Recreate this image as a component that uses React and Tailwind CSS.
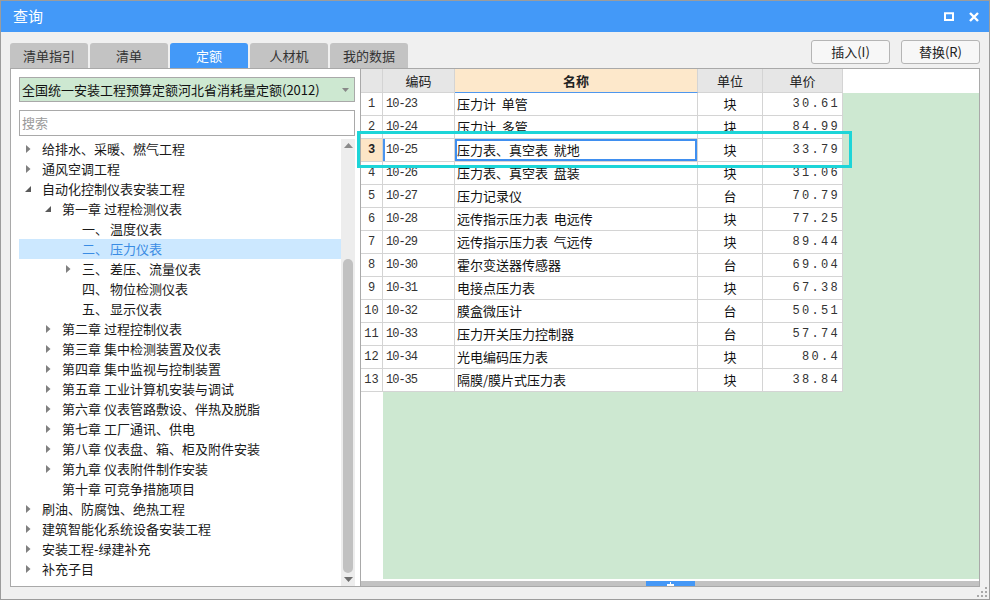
/**
 * 查询 dialog – 定额 lookup window.
 */

const TABS = ['清单指引', '清单', '定额', '人材机', '我的数据'];

const TREE = [
  { lv: 0, arrow: 'right', label: '给排水、采暖、燃气工程' },
  { lv: 0, arrow: 'right', label: '通风空调工程' },
  { lv: 0, arrow: 'down', label: '自动化控制仪表安装工程' },
  { lv: 1, arrow: 'down', label: '第一章 过程检测仪表' },
  { lv: 2, pre: '一、', label: '温度仪表' },
  { lv: 2, pre: '二、', label: '压力仪表', selected: true },
  { lv: 2, arrow: 'right', pre: '三、', label: '差压、流量仪表' },
  { lv: 2, pre: '四、', label: '物位检测仪表' },
  { lv: 2, pre: '五、', label: '显示仪表' },
  { lv: 1, arrow: 'right', label: '第二章 过程控制仪表' },
  { lv: 1, arrow: 'right', label: '第三章 集中检测装置及仪表' },
  { lv: 1, arrow: 'right', label: '第四章 集中监视与控制装置' },
  { lv: 1, arrow: 'right', label: '第五章 工业计算机安装与调试' },
  { lv: 1, arrow: 'right', label: '第六章 仪表管路敷设、伴热及脱脂' },
  { lv: 1, arrow: 'right', label: '第七章 工厂通讯、供电' },
  { lv: 1, arrow: 'right', label: '第八章 仪表盘、箱、柜及附件安装' },
  { lv: 1, arrow: 'right', label: '第九章 仪表附件制作安装' },
  { lv: 1, label: '第十章 可竞争措施项目' },
  { lv: 0, arrow: 'right', label: '刷油、防腐蚀、绝热工程' },
  { lv: 0, arrow: 'right', label: '建筑智能化系统设备安装工程' },
  { lv: 0, arrow: 'right', label: '安装工程-绿建补充' },
  { lv: 0, arrow: 'right', label: '补充子目' },
];

const ROWS = [
  ['10-23', '压力计 单管', '块', '30.61'],
  ['10-24', '压力计 多管', '块', '84.99'],
  ['10-25', '压力表、真空表 就地', '块', '33.79'],
  ['10-26', '压力表、真空表 盘装', '块', '31.06'],
  ['10-27', '压力记录仪', '台', '70.79'],
  ['10-28', '远传指示压力表 电远传', '块', '77.25'],
  ['10-29', '远传指示压力表 气远传', '块', '89.44'],
  ['10-30', '霍尔变送器传感器', '台', '69.04'],
  ['10-31', '电接点压力表', '块', '67.38'],
  ['10-32', '膜盒微压计', '台', '50.51'],
  ['10-33', '压力开关压力控制器', '台', '57.74'],
  ['10-34', '光电编码压力表', '块', '80.4'],
  ['10-35', '隔膜/膜片式压力表', '块', '38.84'],
];

const SELECTED_ROW = 2;

const MONO = "font-['Liberation_Mono',monospace]";

function Arrow({ type }) {
  if (type === 'right') {
    return (
      <svg width="5" height="8" viewBox="0 0 5 8">
        <path d="M0 0 L4.5 4 L0 8 Z" fill="#808080" />
      </svg>
    );
  }
  if (type === 'down') {
    return (
      <svg width="6" height="6" viewBox="0 0 6 6">
        <path d="M6 0 L6 6 L0 6 Z" fill="#595959" />
      </svg>
    );
  }
  return null;
}

function TreeRow({ item }) {
  const pad = { 0: 'pl-[3px]', 1: 'pl-[23px]', 2: 'pl-[43px]' }[item.lv];
  return (
    <div
      className={`flex items-center h-[20px] text-[13px] whitespace-nowrap ${pad} ${
        item.selected ? 'bg-[#cce8ff] text-[#3a8ce4]' : 'text-[#1a1a1a]'
      }`}
    >
      <span className="w-[12px] flex items-center justify-center">
        <Arrow type={item.arrow} />
      </span>
      <span className="ml-[8px] leading-[20px]">
        {item.pre && <span className="inline-block w-[28px]">{item.pre}</span>}
        {item.label}
      </span>
    </div>
  );
}

function TreeScrollbar() {
  return (
    <div className="w-[14px] bg-[#ededed] flex flex-col">
      <div className="h-[12px] flex items-center justify-center">
        <svg width="9" height="5" viewBox="0 0 9 5">
          <path d="M0 5 L4.5 0 L9 5 Z" fill="#8a8a8a" />
        </svg>
      </div>
      <div className="h-[108px]" />
      <div className="flex-1 mx-[2px] rounded-full bg-[#c1c1c1]" />
      <div className="h-[13px] flex items-center justify-center">
        <svg width="9" height="5" viewBox="0 0 9 5">
          <path d="M0 0 L9 0 L4.5 5 Z" fill="#6e6e6e" />
        </svg>
      </div>
    </div>
  );
}

function LeftPanel() {
  return (
    <div className="w-[351px] border border-[#a9a9a9] bg-white flex flex-col pt-[8px] pl-[8px] pr-[5px]">
      <div className="h-[25px] border border-[#a9a9a9] bg-[#cde8d1] flex items-center justify-between pl-[2px] pr-[5px] text-[13px] text-[#111]">
        <span>全国统一安装工程预算定额河北省消耗量定额(2012)</span>
        <svg width="7" height="4" viewBox="0 0 7 4">
          <path d="M0 0 L7 0 L3.5 4 Z" fill="#888" />
        </svg>
      </div>
      <div className="mt-[8px] h-[26px] border border-[#a9a9a9] bg-white flex items-center pl-[2px] text-[13px] text-[#9a9a9a]">
        搜索
      </div>
      <div className="mt-[3px] flex-1 flex min-h-0">
        <div className="flex-1 overflow-hidden">
          {TREE.map((item, i) => (
            <TreeRow key={i} item={item} />
          ))}
        </div>
        <TreeScrollbar />
      </div>
    </div>
  );
}

const CELL = 'border-r border-b border-[#d4d4d4] flex items-center';

function RightPanel() {
  return (
    <div className="flex-1 border border-l-0 border-[#a9a9a9] bg-white flex flex-col">
      {/* header */}
      <div className="h-[24px] flex text-[13px] text-[#222]">
        <div className={`${CELL} w-[22px] bg-[#e6e6e6]`} />
        <div className={`${CELL} w-[72px] bg-[#e6e6e6] justify-center`}>编码</div>
        <div className="w-[243px] border-r border-[#d4d4d4] border-b border-b-[#4e97ee] bg-[#fde8cb] flex items-center justify-center font-bold">
          名称
        </div>
        <div className={`${CELL} w-[65px] bg-[#e6e6e6] justify-center`}>单位</div>
        <div className={`${CELL} w-[80px] bg-[#e6e6e6] justify-center`}>单价</div>
        <div className="flex-1" />
      </div>

      {/* body */}
      <div className="flex-1 flex min-h-0">
        <div className="w-[22px] flex flex-col">
          {ROWS.map((r, i) => (
            <div
              key={i}
              className={`${CELL} h-[23px] justify-center text-[12px] ${MONO} ${
                i === SELECTED_ROW ? 'bg-[#fde5c6] font-bold text-[#222]' : 'text-[#333]'
              }`}
            >
              {i + 1}
            </div>
          ))}
        </div>
        <div className="flex-1 bg-[#cde8d1] flex flex-col">
          {ROWS.map((r, i) => {
            const sel = i === SELECTED_ROW;
            return (
              <div key={i} className="h-[23px] w-[460px] flex bg-white text-[#111]">
                <div
                  className={`${CELL} w-[72px] pl-[3px] text-[12px] tracking-[-1px] text-[#333] ${MONO} ${
                    sel ? 'shadow-[inset_2px_0_0_#4a94ee]' : ''
                  }`}
                >
                  {r[0]}
                </div>
                <div
                  className={`${CELL} w-[243px] pl-[2px] text-[13px] whitespace-pre ${
                    sel ? 'shadow-[inset_0_0_0_2px_#3f8ff0]' : ''
                  }`}
                >
                  {r[1].replace(' ', '  ')}
                </div>
                <div className={`${CELL} w-[65px] justify-center text-[13px]`}>{r[2]}</div>
                <div className={`${CELL} w-[80px] justify-end pr-[2px] text-[12px] tracking-[2.3px] text-[#333] ${MONO}`}>
                  {r[3]}
                </div>
              </div>
            );
          })}
        </div>
      </div>

      <div className="h-[2px]" />
      {/* horizontal scrollbar */}
      <div className="h-[5px] bg-[#c2c2c2] flex">
        <div className="w-[285px]" />
        <div className="w-[49px] bg-[#4598f6] flex items-center justify-center">
          <svg width="7" height="4" viewBox="0 0 7 4">
            <path d="M3 0 H4 V2 H7 V4 H0 V2 H3 Z" fill="#fff" />
          </svg>
        </div>
      </div>
    </div>
  );
}

export default function App() {
  return (
    <div className="relative w-[990px] h-[600px] border border-[#9c9c9c] bg-[#f0f0f0] flex flex-col overflow-hidden font-['Noto_Sans_CJK_SC',sans-serif]">
      {/* title bar */}
      <div className="h-[31px] bg-[#4399f8] flex items-center justify-between pl-[12px] pr-[10px] text-white">
        <span className="text-[15px]">查询</span>
        <div className="flex items-center gap-[15px]">
          <svg width="10" height="9" viewBox="0 0 10 9">
            <rect x="1" y="1.25" width="8" height="6.75" fill="none" stroke="#fff" strokeWidth="2" />
          </svg>
          <svg width="10" height="10" viewBox="0 0 10 10">
            <path d="M1 1 L9 9 M9 1 L1 9" stroke="#fff" strokeWidth="2.4" />
          </svg>
        </div>
      </div>

      {/* tabs + actions */}
      <div className="h-[36px] flex justify-between pl-[9px] pr-[9px]">
        <div className="flex items-end gap-[2px]">
          {TABS.map((t) => (
            <div
              key={t}
              className={`w-[78px] h-[25px] rounded-t-[3px] flex items-center justify-center text-[13px] ${
                t === '定额' ? 'bg-[#4399f8] text-white' : 'bg-[#c3c3c3] text-[#333]'
              }`}
            >
              {t}
            </div>
          ))}
        </div>
        <div className="flex gap-[11px] mt-[8px]">
          {['插入(I)', '替换(R)'].map((b) => (
            <button
              key={b}
              className="w-[79px] h-[24px] rounded-[3px] border border-[#b5b5b5] bg-[#f7f7f7] text-[13px] text-[#222] flex items-center justify-center"
            >
              {b}
            </button>
          ))}
        </div>
      </div>

      {/* panels */}
      <div className="flex-1 flex px-[9px] pb-[12px] min-h-0">
        <LeftPanel />
        <RightPanel />
      </div>

      {/* annotation box */}
      <div className="absolute left-[356px] top-[130px] w-[495px] h-[37px] border-[3px] border-[#1dd5d8] pointer-events-none" />

      {/* resize grip */}
      <svg className="absolute right-[2px] bottom-[2px]" width="10" height="10" viewBox="0 0 10 10">
        <g fill="#a8a8a8">
          <rect x="8" y="0" width="2" height="2" />
          <rect x="4" y="4" width="2" height="2" />
          <rect x="8" y="4" width="2" height="2" />
          <rect x="0" y="8" width="2" height="2" />
          <rect x="4" y="8" width="2" height="2" />
          <rect x="8" y="8" width="2" height="2" />
        </g>
      </svg>
    </div>
  );
}
